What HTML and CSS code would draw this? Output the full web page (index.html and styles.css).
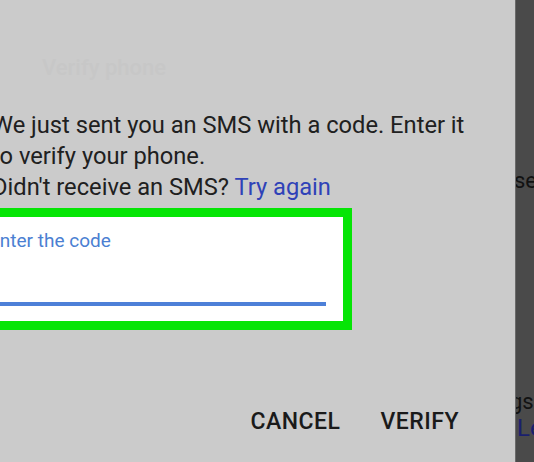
FILE: index.html
```html
<!DOCTYPE html>
<html>
<head>
  <meta charset="UTF-8" />
  <title>Verify phone</title>
  <link rel="stylesheet" href="styles.css">
</head>
<body>

  <div class="screen">
    <div class="dialog">
      <div class="ghost-title">Verify phone</div>

      <div class="message">
        <p>We just sent you an SMS with a code. Enter it<br>to verify your phone.</p>
        <p>Didn't receive an SMS? <a class="link" href="#">Try again</a></p>
      </div>

      <div class="highlight">
        <div class="field">
          <label class="field-label">Enter the code</label>
          <div class="field-line"></div>
        </div>
      </div>

      <div class="actions">
        <button class="action">CANCEL</button>
        <button class="action">VERIFY</button>
      </div>
    </div>

    <div class="behind">
      <div class="behind-text b1">sed</div>
      <div class="behind-text b2">gs</div>
      <div class="behind-link">Le</div>
    </div>
  </div>

</body>
</html>
```

FILE: styles.css
```css
body {
  margin: 0;
  padding: 0;
  background: #4a4a4a;
  font-family: Roboto, "Noto Sans", sans-serif;
  overflow: hidden;
}

.screen {
  display: flex;
  width: 534px;
  height: 462px;
  overflow: hidden;
}

.dialog {
  width: 515px;
  flex-shrink: 0;
  background: #cbcbcb;
  border-right: 1px solid #6a6a6a;
  display: flex;
  flex-direction: column;
  overflow: hidden;
}

.ghost-title {
  margin-top: 55px;
  margin-left: 42px;
  font-size: 22px;
  font-weight: 500;
  color: #c7c7c7;
  height: 26px;
}

.message {
  margin-top: 29px;
  margin-left: -8px;
  font-size: 23.7px;
  line-height: 31px;
  color: #202020;
}

.message p {
  margin: 0;
  white-space: nowrap;
}

.link {
  color: #2f42b8;
  text-decoration: none;
}

.highlight {
  margin-top: 5px;
  margin-left: -20px;
  width: 354px;
  height: 104px;
  border: 9px solid #06e506;
  background: #ffffff;
}

.field {
  padding: 13px 17px 0 0;
  display: flex;
  flex-direction: column;
}

.field-label {
  font-size: 19px;
  line-height: 22px;
  color: #4b7fd2;
}

.field-line {
  margin-top: 50px;
  height: 4px;
  background: #4d80d8;
}

.actions {
  display: flex;
  justify-content: flex-end;
  gap: 40px;
  margin-top: 78px;
  padding-right: 56px;
}

.action {
  background: none;
  border: none;
  padding: 0;
  font-family: Roboto, "Noto Sans", sans-serif;
  font-size: 23px;
  font-weight: 500;
  letter-spacing: 0.5px;
  color: #1a1a1a;
}

.behind {
  flex: 1;
  background: #4a4a4a;
  display: flex;
  flex-direction: column;
  overflow: hidden;
  white-space: nowrap;
}

.behind-text {
  font-size: 22px;
  color: #121212;
  margin-left: -2px;
}

.b1 {
  margin-top: 168px;
}

.b2 {
  margin-top: 196px;
  margin-left: -6px;
}

.behind-link {
  font-size: 24px;
  color: #1a1f6e;
  margin-left: 1px;
}
```
